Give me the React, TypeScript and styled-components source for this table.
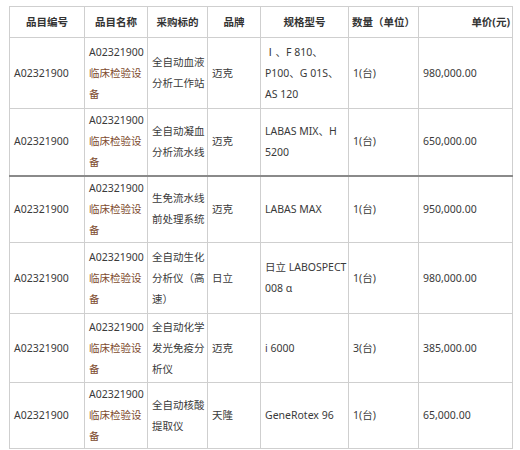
import React from "react";
import styled, { createGlobalStyle } from "styled-components";

interface Item {
  code: string;
  target: string;
  brand: string;
  model: string[];
  qty: string;
  price: string;
  height: number;
  heavyBottom?: boolean;
}

const items: Item[] = [
  {
    code: "A02321900",
    target: "全自动血液分析工作站",
    brand: "迈克",
    model: ["Ⅰ、F 810、", "P100、G 01S、", "AS 120"],
    qty: "1(台)",
    price: "980,000.00",
    height: 71,
  },
  {
    code: "A02321900",
    target: "全自动凝血分析流水线",
    brand: "迈克",
    model: ["LABAS MIX、H", "5200"],
    qty: "1(台)",
    price: "650,000.00",
    height: 67,
    heavyBottom: true,
  },
  {
    code: "A02321900",
    target: "生免流水线前处理系统",
    brand: "迈克",
    model: ["LABAS MAX"],
    qty: "1(台)",
    price: "950,000.00",
    height: 67,
  },
  {
    code: "A02321900",
    target: "全自动生化分析仪（高速）",
    brand: "日立",
    model: ["日立 LABOSPECT", "008 α"],
    qty: "1(台)",
    price: "980,000.00",
    height: 71,
  },
  {
    code: "A02321900",
    target: "全自动化学发光免疫分析仪",
    brand: "迈克",
    model: ["i 6000"],
    qty: "3(台)",
    price: "385,000.00",
    height: 69,
  },
  {
    code: "A02321900",
    target: "全自动核酸提取仪",
    brand: "天隆",
    model: ["GeneRotex 96"],
    qty: "1(台)",
    price: "65,000.00",
    height: 66,
  },
];

const widths = [75, 63, 60, 53, 88, 70, 94];

const GlobalStyle = createGlobalStyle`
  body {
    margin: 0;
    background: #ffffff;
    font-family: "Noto Sans", "Noto Sans CJK SC", sans-serif;
  }
`;

export default function App() {
  return (
    <>
      <GlobalStyle />
      <Page>
        <Table>
          <colgroup>
            {widths.map((w, i) => (
              <col key={i} style={{ width: w }} />
            ))}
          </colgroup>
          <thead>
            <tr>
              <Th>品目编号</Th>
              <Th>品目名称</Th>
              <Th>采购标的</Th>
              <Th>品牌</Th>
              <Th>规格型号</Th>
              <Th>数量（单位）</Th>
              <Th $align="right">单价(元)</Th>
            </tr>
          </thead>
          <tbody>
            {items.map((item, i) => (
              <Row key={i} $h={item.height} $heavy={item.heavyBottom}>
                <Td>{item.code}</Td>
                <Td>
                  A02321900
                  <Category>临床检验设备</Category>
                </Td>
                <Td>{item.target}</Td>
                <Td>{item.brand}</Td>
                <Td>
                  {item.model.map((line, j) => (
                    <ModelLine key={j}>{line}</ModelLine>
                  ))}
                </Td>
                <Td>{item.qty}</Td>
                <Td>{item.price}</Td>
              </Row>
            ))}
          </tbody>
        </Table>
      </Page>
    </>
  );
}

const Page = styled.div`
  padding: 6px 0 0 9px;
`;

const Table = styled.table`
  border-collapse: collapse;
  table-layout: fixed;
  width: 503px;
  font-size: 10.5px;
  line-height: 21px;
  color: #3a3a3a;
  border-left: 1.5px solid #7a7a7a;
  border-bottom: 1.5px solid #7a7a7a;
`;

const Th = styled.th<{ $align?: "right" }>`
  height: 30px;
  padding: 0 2px;
  border: 1px solid #cfcfcf;
  font-weight: 700;
  color: #333333;
  text-align: ${(p) => p.$align ?? "center"};
  white-space: nowrap;
`;

const Row = styled.tr<{ $h: number; $heavy?: boolean }>`
  height: ${(p) => p.$h}px;
  border-bottom: ${(p) => (p.$heavy ? "2px solid #8a8a8a" : "1px solid #cfcfcf")};
`;

const Td = styled.td`
  padding: 0 2px 0 4px;
  border-left: 1px solid #cfcfcf;
  border-right: 1px solid #cfcfcf;
  vertical-align: middle;
  text-align: left;
  overflow-wrap: break-word;
`;

const ModelLine = styled.div`
  white-space: nowrap;
`;

const Category = styled.span`
  color: #7d4a2d;
`;
